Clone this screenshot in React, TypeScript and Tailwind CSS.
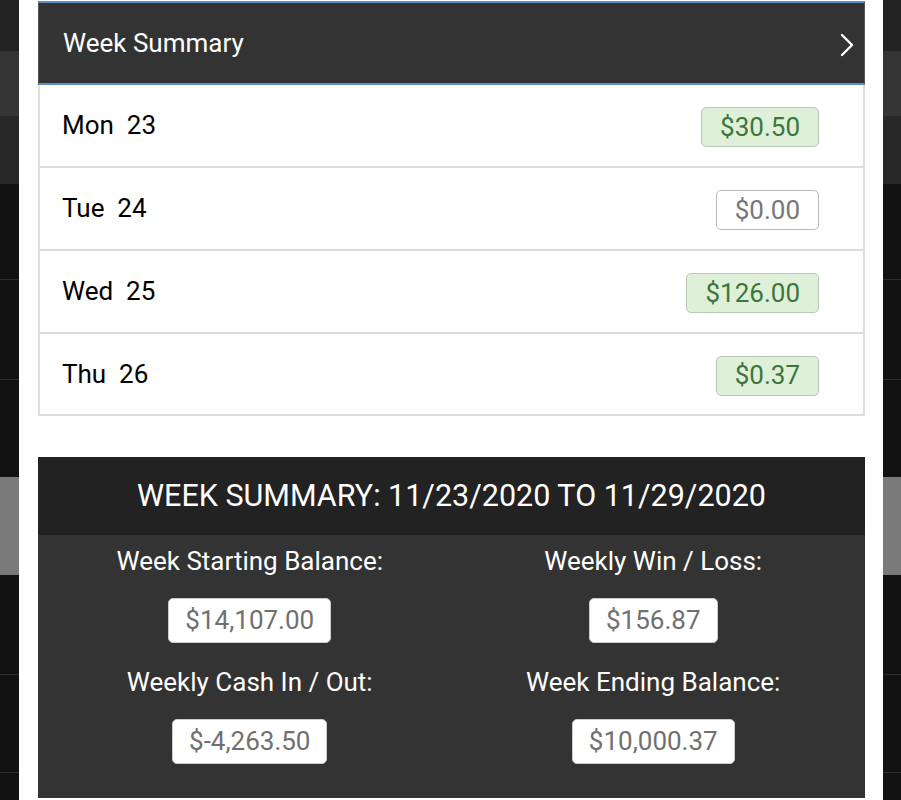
const BANDS = [
  { h: "h-[51px]", c: "bg-[#232323]" },
  { h: "h-[65px]", c: "bg-[#353535]" },
  { h: "h-[68px]", c: "bg-[#282828]" },
  { h: "h-[96px]", c: "bg-[#121212] border-b border-[#2c2c2c]" },
  { h: "h-[100px]", c: "bg-[#121212] border-b border-[#2c2c2c]" },
  { h: "h-[97px]", c: "bg-[#121212]" },
  { h: "h-[98px]", c: "bg-[#7a7a7a]" },
  { h: "h-[100px]", c: "bg-[#121212] border-b border-[#2c2c2c]" },
  { h: "h-[98px]", c: "bg-[#121212] border-b border-[#2c2c2c]" },
  { h: "h-[27px]", c: "bg-[#121212]" },
];

const DAYS = [
  { day: "Mon", date: "23", amount: "$30.50", win: true, h: "h-[83px]" },
  { day: "Tue", date: "24", amount: "$0.00", win: false, h: "h-[83px]" },
  { day: "Wed", date: "25", amount: "$126.00", win: true, h: "h-[83px]" },
  { day: "Thu", date: "26", amount: "$0.37", win: true, h: "h-[82px]" },
];

const TOTALS = [
  { label: "Week Starting Balance:", value: "$14,107.00" },
  { label: "Weekly Win / Loss:", value: "$156.87" },
  { label: "Weekly Cash In / Out:", value: "$-4,263.50" },
  { label: "Week Ending Balance:", value: "$10,000.37" },
];

function Backdrop({ width }: { width: string }) {
  return (
    <div className={`${width} shrink-0 flex flex-col`}>
      {BANDS.map((band, i) => (
        <div key={i} className={`${band.h} ${band.c} box-border`} />
      ))}
    </div>
  );
}

function DayRow({ day, date, amount, win, h }: (typeof DAYS)[number]) {
  return (
    <div className={`${h} box-border flex items-center justify-between pl-[22px] pr-[44px] border-b-2 border-[#dddddd]`}>
      <span className="text-[26px] text-black whitespace-pre">
        {day}  {date}
      </span>
      <span
        className={
          win
            ? "h-[40px] flex items-center px-[18px] rounded-[5px] border border-[#b9cab4] bg-[#dff0d8] text-[#3c763d] text-[26px] mt-[3px]"
            : "h-[40px] flex items-center px-[18px] rounded-[5px] border border-[#bbbbbb] bg-white text-[#777777] text-[26px] mt-[3px]"
        }
      >
        {amount}
      </span>
    </div>
  );
}

export default function App() {
  return (
    <div
      className="flex w-[901px] h-[800px] overflow-hidden bg-[#121212]"
      style={{ fontFamily: "Roboto, 'Noto Sans', sans-serif" }}
    >
      <Backdrop width="w-[19px]" />
      <main className="w-[864px] shrink-0 bg-white pl-[19px] pr-[18px] pt-[1px]">
        <section className="border-x-2 border-[#dddddd]">
          <div className="h-[84px] box-border flex items-center justify-between pl-[22px] pr-[10px] bg-[#333333] border-y-2 border-[#5b8fc9] -mx-[2px] border-x border-x-[#555555] text-white">
            <span className="text-[26px] pl-[2px]">Week Summary</span>
            <svg width="14" height="24" viewBox="0 0 14 24" fill="none" className="mt-[4px]">
              <polyline
                points="2,2 12,12 2,22"
                stroke="white"
                strokeWidth="2.4"
                strokeLinecap="round"
                strokeLinejoin="round"
              />
            </svg>
          </div>
          {DAYS.map((d) => (
            <DayRow key={d.day} {...d} />
          ))}
        </section>

        <section className="mt-[41px] bg-[#333333]">
          <div className="h-[78px] flex items-center justify-center bg-[#222222] text-white text-[30.5px]">
            WEEK SUMMARY: 11/23/2020 TO 11/29/2020
          </div>
          <div className="grid grid-cols-2 gap-y-[24px] px-[10px] pt-[11px] pb-[34px]">
            {TOTALS.map((t) => (
              <div key={t.label} className="flex flex-col items-center">
                <span className="h-[30px] leading-[30px] text-white text-[26px]">
                  {t.label}
                </span>
                <span className="mt-[22px] h-[45px] flex items-center px-[16px] rounded-[5px] border border-[#cccccc] bg-white text-[#707070] text-[26px]">
                  {t.value}
                </span>
              </div>
            ))}
          </div>
        </section>
      </main>
      <Backdrop width="w-[18px]" />
    </div>
  );
}
